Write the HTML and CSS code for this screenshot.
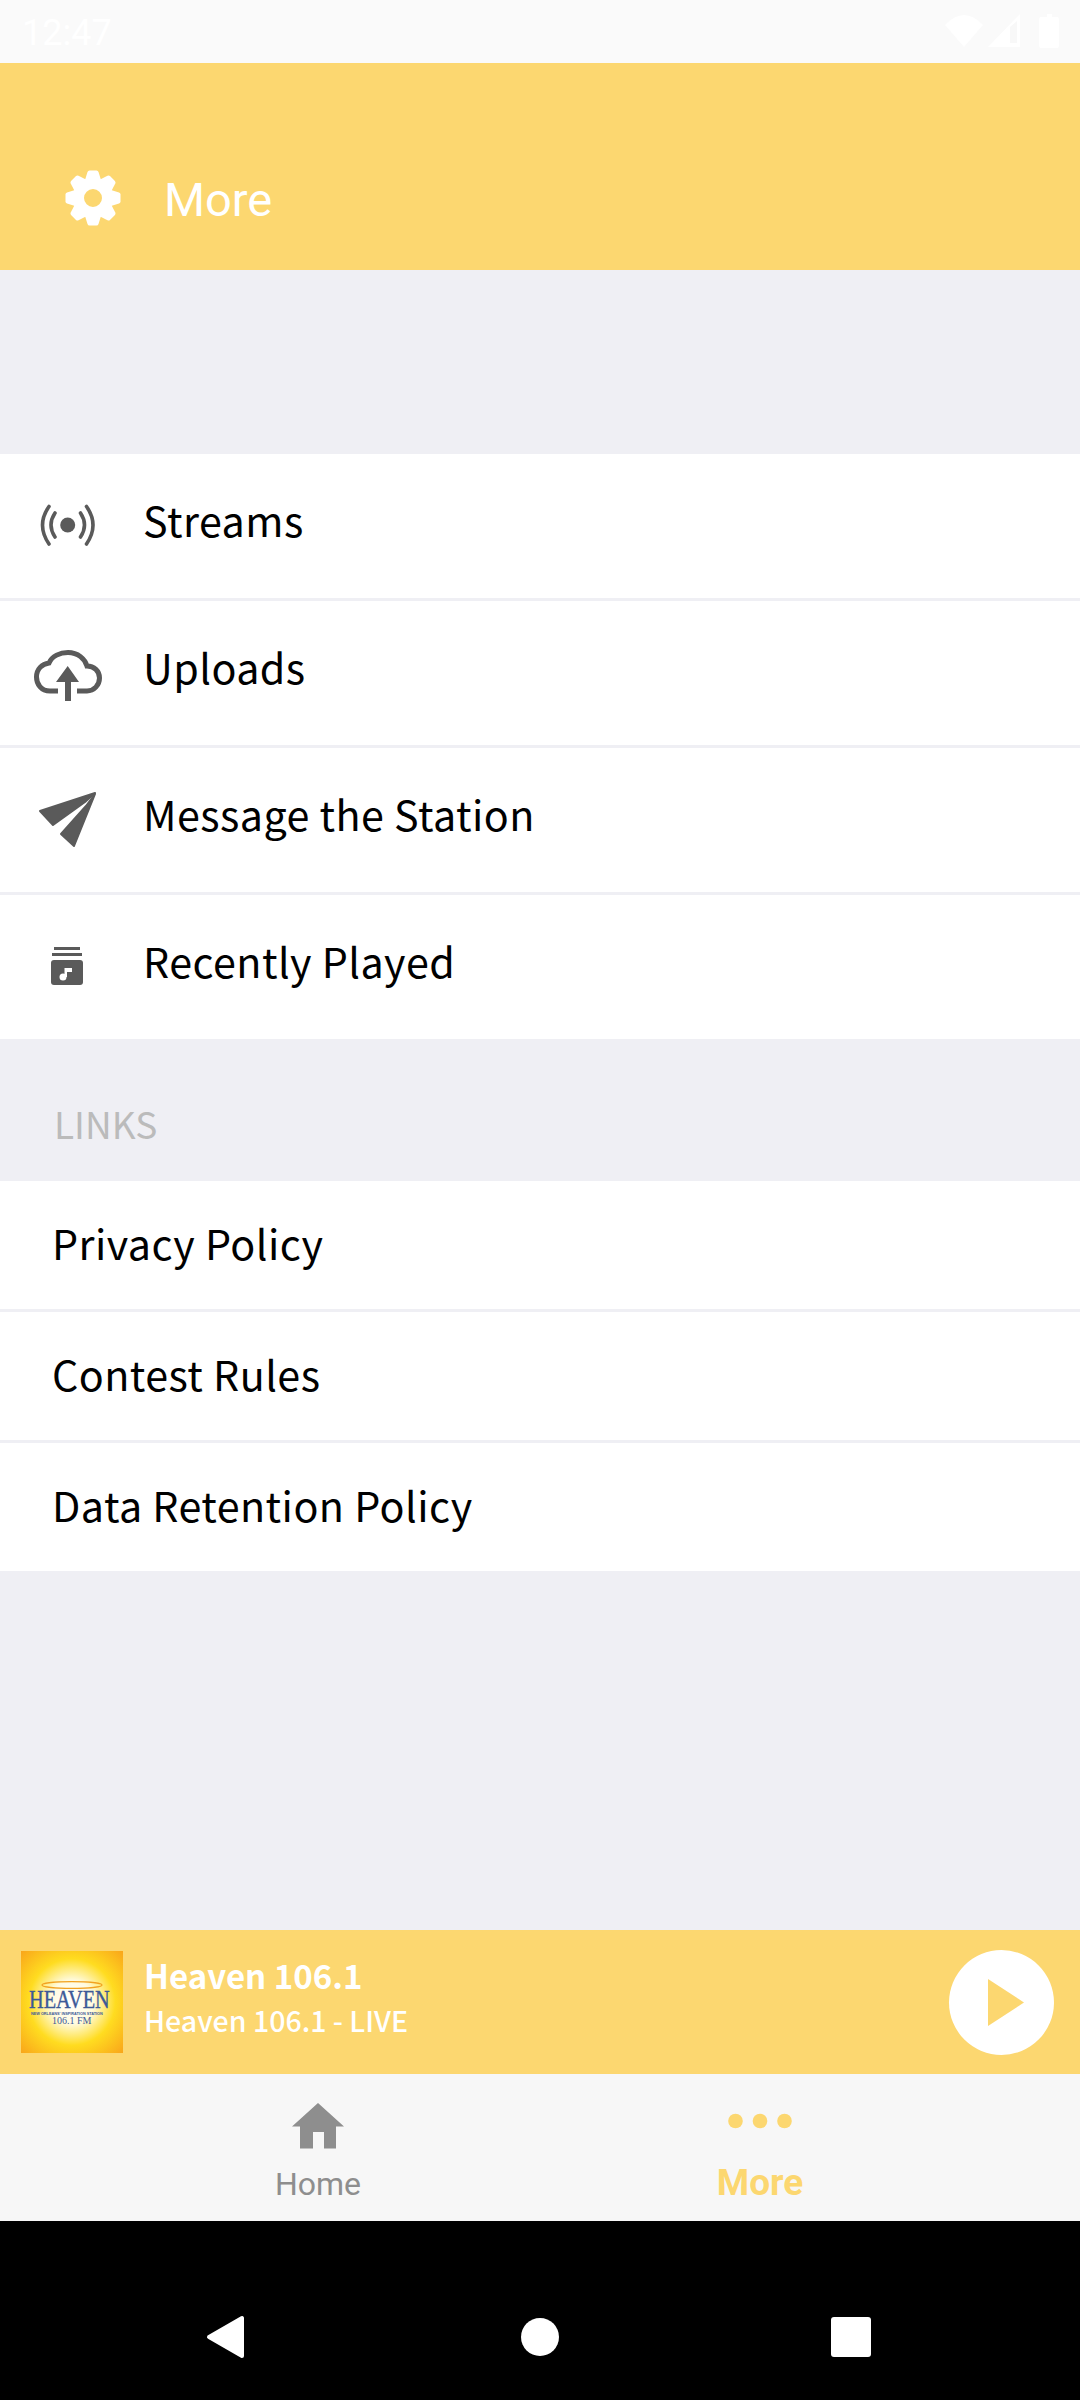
FILE: index.html
```html
<!DOCTYPE html>
<html lang="en">
  <head>
    <meta charset="UTF-8" />
    <meta name="viewport" content="width=device-width, initial-scale=1.0" />
    <title>More</title>
    <link rel="stylesheet" href="styles.css">
  </head>
  <body>
    <div class="status">
      <span class="clock">12:47</span>
      <svg class="status-icons" width="120" height="63" viewBox="945 0 120 63">
        <path class="white" d="M945 25 Q964 5 983 25 L964 47 Z" />
        <path class="white" d="M988 47 L1020 14 V47 Z" />
        <path class="notch" d="M1010 27 L1017 21 V43 H1010 Z" />
        <path class="white" d="M1047 14 H1052 V17 H1057 Q1059 17 1059 19 V46 Q1059 48 1057 48 H1041 Q1039 48 1039 46 V19 Q1039 17 1041 17 H1047 Z" />
      </svg>
    </div>

    <div class="header">
      <svg class="gear" width="56" height="56" viewBox="-28 -28 56 56">
        <circle class="gear-ring" r="14.5" />
        <path id="tooth" class="white" d="M-8 -18 L-5.5 -26 Q-5 -27.5 -3.5 -27.5 H3.5 Q5 -27.5 5.5 -26 L8 -18 Z" />
        <use href="#tooth" transform="rotate(45)" />
        <use href="#tooth" transform="rotate(90)" />
        <use href="#tooth" transform="rotate(135)" />
        <use href="#tooth" transform="rotate(180)" />
        <use href="#tooth" transform="rotate(225)" />
        <use href="#tooth" transform="rotate(270)" />
        <use href="#tooth" transform="rotate(315)" />
      </svg>
      <span class="title">More</span>
    </div>

    <div class="content">
      <div class="list first-list">
        <div class="row">
          <svg class="row-icon" width="143" height="60" viewBox="0 496 143 60">
            <circle class="icon-fill" cx="67.7" cy="525" r="7.5" />
            <path class="icon-line" d="M55 513 Q47 525 55 537 M80.5 513 Q88.5 525 80.5 537 M49 506.5 Q36 525 49 544 M86.5 506.5 Q99.5 525 86.5 544" />
          </svg>
          <span class="row-text">Streams</span>
        </div>
        <div class="row">
          <svg class="row-icon" width="143" height="60" viewBox="0 643 143 60">
            <path class="icon-cloud" d="M58 691 H50 C41 691 36.5 684 36.5 677 C36.5 669 42 664 49 663 C52 656 60 652.5 68 652.5 C78 652.5 85 659 87 666 C94 666 99.5 671 99.5 678 C99.5 685 94 691 87 691 H77" />
            <path class="icon-fill" d="M67.7 666 L79 682 H71 V701 H65 V682 H56 Z" />
          </svg>
          <span class="row-text">Uploads</span>
        </div>
        <div class="row">
          <svg class="row-icon" width="143" height="60" viewBox="0 790 143 60">
            <path class="icon-plane" d="M95 793 L40 811 L53 825 L85 802 Z" />
            <path class="icon-plane" d="M95 794 L86 806 L61 834 L74 846 Z" />
          </svg>
          <span class="row-text">Message the Station</span>
        </div>
        <div class="row">
          <svg class="row-icon" width="143" height="60" viewBox="0 937 143 60">
            <rect class="icon-fill" x="54" y="947" width="26" height="3" />
            <rect class="icon-fill" x="52" y="953" width="30" height="3" />
            <rect class="icon-fill" x="51" y="960" width="32" height="25" rx="3" />
            <circle class="white" cx="63" cy="977" r="3.5" />
            <path class="white" d="M64.5 977 V968 H72 V972 H67 V977 Z" />
          </svg>
          <span class="row-text">Recently Played</span>
        </div>
      </div>

      <div class="section-title">LINKS</div>

      <div class="list">
        <div class="row link-row"><span class="row-text">Privacy Policy</span></div>
        <div class="row link-row"><span class="row-text">Contest Rules</span></div>
        <div class="row link-row"><span class="row-text">Data Retention Policy</span></div>
      </div>
    </div>

    <div class="player">
      <div class="logo">
        <svg width="102" height="102" viewBox="0 0 102 102">
          <ellipse class="halo" cx="51" cy="34" rx="30" ry="3.4" />
          <text class="logo-name" x="8" y="46.8" transform="scale(1 1.22)">HEAVEN</text>
          <text class="logo-small" x="10" y="63.5">NEW ORLEANS' INSPIRATION STATION</text>
          <text class="logo-freq" x="31" y="72.5">106.1 FM</text>
        </svg>
      </div>
      <div class="player-text">
        <div class="station">Heaven 106.1</div>
        <div class="now">Heaven 106.1 - LIVE</div>
      </div>
      <div class="play">
        <svg width="105" height="105" viewBox="0 0 105 105">
          <path class="yellow" d="M39 29 L75 52.5 L39 76 Z" />
        </svg>
      </div>
    </div>

    <div class="tabs">
      <div class="tab">
        <svg class="tab-icon" width="52" height="46" viewBox="0 0 52 46">
          <path class="gray" d="M26 0 L52 23.5 H44 V45.5 H32 V29 H21 V45.5 H8 V23.5 H0 Z" />
        </svg>
        <span class="tab-label">Home</span>
      </div>
      <div class="tab active">
        <svg class="tab-icon" width="64" height="46" viewBox="0 0 64 46">
          <circle class="yellow" cx="7.5" cy="18" r="7.3" />
          <circle class="yellow" cx="32" cy="18" r="7.3" />
          <circle class="yellow" cx="56.5" cy="18" r="7.3" />
        </svg>
        <span class="tab-label">More</span>
      </div>
    </div>

    <div class="nav">
      <svg width="1080" height="179" viewBox="0 2221 1080 179">
        <path class="nav-back" d="M242 2318 V2356 L209 2337 Z" />
        <circle class="white" cx="540" cy="2337" r="19" />
        <rect class="white" x="831" y="2317" width="40" height="40" rx="3" />
      </svg>
    </div>
  </body>
</html>
```

FILE: styles.css
```css
* {
  box-sizing: border-box;
}
body {
  margin: 0;
  width: 1080px;
  height: 2400px;
  display: flex;
  flex-direction: column;
  background-color: #efeff4;
  font-family: "Noto Sans CJK JP", "Noto Sans", sans-serif;
}
svg {
  display: block;
}
.white {
  fill: #fff;
}
.yellow {
  fill: #fcd770;
}
.gray {
  fill: #8e8e8e;
}

.status {
  height: 63px;
  flex: none;
  display: flex;
  justify-content: space-between;
  background-color: #fafafa;
  padding-left: 22px;
  padding-right: 15px;
}
.clock {
  font-family: Roboto, sans-serif;
  font-size: 36px;
  line-height: 66px;
  color: #fff;
}
.notch {
  fill: #f8f8f8;
}

.header {
  height: 207px;
  flex: none;
  display: flex;
  align-items: center;
  background-color: #fcd770;
  padding: 103px 0 41px 65px;
}
.gear-ring {
  fill: none;
  stroke: #fff;
  stroke-width: 11px;
}
.title {
  margin-left: 43px;
  font-family: Roboto, sans-serif;
  font-size: 47px;
  line-height: 60px;
  color: #fff;
  padding-top: 4px;
}

.content {
  flex: 1;
}
.list {
  background-color: #fff;
}
.first-list {
  margin-top: 184px;
}
.row {
  height: 147px;
  display: flex;
  align-items: center;
  border-bottom: 3px solid #efeff4;
}
.row:last-child {
  height: 144px;
  border-bottom: none;
}
.link-row {
  height: 131px;
  padding-left: 52px;
}
.link-row:last-child {
  height: 128px;
}
.row-text {
  font-size: 41.25px;
  letter-spacing: 0.45px;
  color: #000;
  padding-bottom: 15px;
}
.link-row .row-text {
  padding-bottom: 6px;
}
.icon-fill {
  fill: #5a5a5a;
}
.icon-line {
  fill: none;
  stroke: #5a5a5a;
  stroke-width: 3.6px;
  stroke-linecap: round;
}
.icon-cloud {
  fill: none;
  stroke: #5a5a5a;
  stroke-width: 5px;
}
.icon-plane {
  fill: #5a5a5a;
  stroke: #5a5a5a;
  stroke-width: 2px;
  stroke-linejoin: round;
}
.section-title {
  height: 142px;
  padding: 56px 0 0 54px;
  font-size: 37px;
  line-height: 56px;
  color: #bbb;
}

.player {
  height: 144px;
  flex: none;
  display: flex;
  align-items: center;
  background-color: #fcd770;
  padding-left: 21px;
  padding-right: 26px;
}
.logo {
  width: 102px;
  height: 102px;
  background: radial-gradient(circle, #fff 0%, #fffbe0 30%, #ffdc20 60%, #f9a51a 100%);
}
.halo {
  fill: none;
  stroke: #f2a21f;
  stroke-width: 1.2px;
}
.logo-name {
  font-family: "Liberation Serif", serif;
  font-size: 20.3px;
  fill: #3d5a98;
  stroke: #3d5a98;
  stroke-width: 0.3px;
}
.logo-small {
  font-family: "Liberation Sans", sans-serif;
  font-size: 3.8px;
  font-weight: bold;
  fill: #3d5a98;
}
.logo-freq {
  font-family: "Liberation Serif", serif;
  font-size: 10px;
  fill: #3d5a98;
}
.player-text {
  flex: 1;
  margin-left: 21px;
  padding-bottom: 10px;
  color: #fff;
}
.station {
  font-size: 33px;
  font-weight: 700;
  line-height: 44px;
}
.now {
  margin-top: 1px;
  font-size: 28.5px;
  font-weight: 500;
  line-height: 44px;
}
.play {
  width: 105px;
  height: 105px;
  border-radius: 50%;
  background-color: #fff;
}

.tabs {
  height: 147px;
  flex: none;
  display: flex;
  background-color: #f7f7f7;
  padding-left: 97px;
}
.tab {
  width: 442px;
  display: flex;
  flex-direction: column;
  align-items: center;
  padding-top: 29px;
  font-family: Roboto, sans-serif;
}
.tab-label {
  margin-top: 15px;
  font-size: 32px;
  line-height: 40px;
  color: #8e8e8e;
}
.active .tab-label {
  margin-top: 14px;
  font-size: 37px;
  font-weight: 700;
  color: #fcd770;
}

.nav {
  height: 179px;
  flex: none;
  background-color: #000;
}
.nav-back {
  fill: #fff;
  stroke: #fff;
  stroke-width: 4px;
  stroke-linejoin: round;
}
```
